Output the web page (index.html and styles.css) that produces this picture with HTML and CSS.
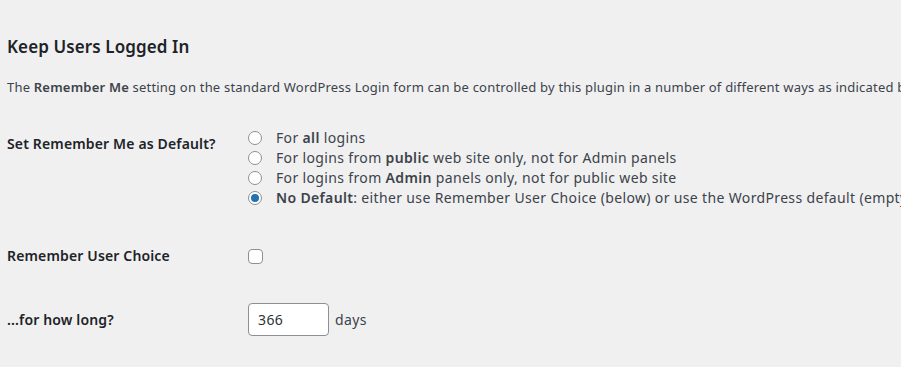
FILE: index.html
```html
<!DOCTYPE html>
<html lang="en">
    <head>
        <meta charset="UTF-8">
        <title>Keep Users Logged In</title>
        <link rel="stylesheet" href="styles.css">
    </head>
    <body>
        <div class="wrap">
            <h2>Keep Users Logged In</h2>
            <p class="intro">The <strong>Remember Me</strong> setting on the standard WordPress Login form can be controlled by this plugin in a number of different ways as indicated below.</p>

            <div class="form-row first">
                <div class="row-label">Set Remember Me as Default?</div>
                <div class="row-field">
                    <label class="choice"><input type="radio" name="default" value="all"><span>For <strong>all</strong> logins</span></label>
                    <label class="choice"><input type="radio" name="default" value="public"><span>For logins from <strong>public</strong> web site only, not for Admin panels</span></label>
                    <label class="choice"><input type="radio" name="default" value="admin"><span>For logins from <strong>Admin</strong> panels only, not for public web site</span></label>
                    <label class="choice"><input type="radio" name="default" value="none" checked><span><strong>No Default</strong>: either use Remember User Choice (below) or use the WordPress default (empty checkbox)</span></label>
                </div>
            </div>

            <div class="form-row second">
                <label class="row-label" for="choice">Remember User Choice</label>
                <div class="row-field">
                    <input type="checkbox" id="choice">
                </div>
            </div>

            <div class="form-row third">
                <label class="row-label" for="days">...for how long?</label>
                <div class="row-field">
                    <input type="text" id="days" class="small-text" value="366"> days
                </div>
            </div>
        </div>
    </body>
</html>
```

FILE: styles.css
```css
html, body {
margin: 0;
padding: 0;
background-color: #f0f0f1;
overflow: hidden;
}

body {
color: #3c434a;
font-family: "Noto Sans", "Open Sans", sans-serif;
font-size: 13px;
line-height: 1.5;
}

.wrap {
padding: 0 0 0 7px;
white-space: nowrap;
}

h2 {
margin: 36px 0 0;
font-size: 17px;
font-weight: 600;
line-height: 22px;
color: #1d2327;
letter-spacing: 0.1px;
}

.intro {
margin: 19px 0 0;
line-height: 20px;
letter-spacing: 0.2px;
}

.intro strong {
font-weight: 600;
}

/* Settings rows */
.form-row {
display: flex;
}

.form-row.first {
margin-top: 31px;
align-items: flex-start;
}

.form-row.second {
margin-top: 39px;
align-items: center;
}

.form-row.third {
margin-top: 38px;
align-items: center;
}

.row-label {
width: 241px;
flex-shrink: 0;
font-size: 14px;
font-weight: 600;
color: #1d2327;
line-height: 18px;
letter-spacing: 0.15px;
}

.first .row-label {
padding-top: 7px;
}

.row-field {
font-size: 14px;
line-height: 20px;
letter-spacing: 0.35px;
}

.choice {
display: flex;
align-items: center;
height: 20px;
}

.choice strong {
font-weight: 600;
}

input[type="radio"], input[type="checkbox"] {
appearance: none;
-webkit-appearance: none;
margin: 0 14px 0 0;
width: 14px;
height: 14px;
border: 1px solid #8c8f94;
background-color: #fff;
box-sizing: border-box;
flex-shrink: 0;
display: block;
}

input[type="radio"] {
border-radius: 50%;
position: relative;
}

input[type="radio"]:checked::before {
content: "";
position: absolute;
left: 2px;
top: 2px;
width: 8px;
height: 8px;
border-radius: 50%;
background-color: #2271b1;
}

input[type="checkbox"] {
width: 15px;
height: 15px;
border-radius: 4px;
}

.third .row-field {
display: flex;
align-items: center;
}

.small-text {
width: 81px;
height: 33px;
box-sizing: border-box;
margin: 0 6px 0 0;
padding: 0 9px;
border: 1px solid #8c8f94;
border-radius: 4px;
background-color: #fff;
color: #2c3338;
font-family: inherit;
font-size: 14px;
letter-spacing: 0.4px;
}
```
